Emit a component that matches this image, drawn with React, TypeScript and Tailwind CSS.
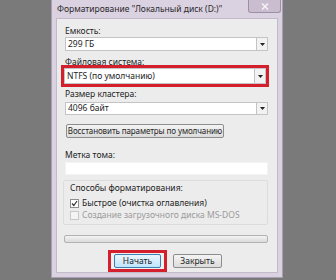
const font = { fontFamily: '"Noto Sans", "Open Sans", sans-serif' };

const Combo = ({ value, h = 14 }: { value: string; h?: number }) => (
  <div
    className="flex items-stretch bg-white border border-[#c4c4c4]"
    style={{ height: h }}
  >
    <div className="flex-1 pl-[2px] text-[8.5px] leading-none flex items-center text-[#1e1e1e] whitespace-nowrap">
      {value}
    </div>
    <div className="w-[11px] flex items-center justify-center border-l border-[#c4c4c4] bg-[#f2f2f2]">
      <svg width="5" height="3" viewBox="0 0 5 3">
        <path d="M0 0h5L2.5 3z" fill="#222" />
      </svg>
    </div>
  </div>
);

const Check = ({ checked, label, disabled }: { checked?: boolean; label: string; disabled?: boolean }) => (
  <div className="flex items-center h-[12px] gap-[3px]">
    <div
      className={
        "w-[9px] h-[9px] border flex items-center justify-center " +
        (disabled ? "border-[#c8c8c8] bg-[#f4f4f4]" : "border-[#8e8f8f] bg-white")
      }
    >
      {checked && (
        <svg width="7" height="7" viewBox="0 0 7 7">
          <path d="M1 3.5l1.8 2L6 1" stroke="#333" strokeWidth="1.2" fill="none" />
        </svg>
      )}
    </div>
    <span
      className={
        "text-[8.5px] leading-none whitespace-nowrap " + (disabled ? "text-[#9b9b9b]" : "text-[#1e1e1e]")
      }
    >
      {label}
    </span>
  </div>
);

export default function App() {
  return (
    <div className="w-[336px] h-[280px] bg-[#7a7a7a] pl-[51px] overflow-hidden" style={font}>
      <div className="w-[232px] h-[278px] bg-[#dad1e1] border-l border-r border-b border-[#a99fb2] flex flex-col">
        {/* title bar */}
        <div className="h-[18px] flex items-start relative">
          <div className="pl-[5px] pt-[5px] text-[8.5px] leading-none text-[#2a2a2a] whitespace-nowrap">
            Форматирование "Локальный диск (D:)"
          </div>
          <div className="absolute right-[1px] top-0 w-[33px] h-[13px] rounded-b-[3px] bg-[#c9bdcf] border border-t-0 border-[#9c90a6] flex items-center justify-center">
            <svg width="8" height="7" viewBox="0 0 8 7">
              <path d="M1 0.5l6 6M7 0.5l-6 6" stroke="#f4f0f6" strokeWidth="1.6" />
            </svg>
          </div>
        </div>

        {/* content */}
        <div className="mx-[4px] h-[255px] bg-[#ececec] border border-[#c3bbc9] flex flex-col pl-[8px] pr-[9px] text-[#1e1e1e] text-[8.5px]">
          <div className="mt-[6px] h-[12px] leading-[12px]">Емкость:</div>
          <Combo value="299 ГБ" />

          <div className="mt-[5px] h-[12px] leading-[12px]">Файловая система:</div>
          <div className="-mt-[3px] -ml-[4px] -mr-[1px] h-[22px] border-[3px] border-[#d4202c] bg-white">
            <Combo value="NTFS (по умолчанию)" h={16} />
          </div>

          <div className="mt-[1px] h-[12px] leading-[12px]">Размер кластера:</div>
          <div className="mt-[2px]">
            <Combo value="4096 байт" h={13} />
          </div>

          <div className="mt-[9px] ml-[1px] w-[158px] h-[14px] rounded-[2px] border border-[#8d8d8d] bg-gradient-to-b from-[#f4f4f4] to-[#dcdcdc] flex items-center justify-center leading-none whitespace-nowrap text-[8px] tracking-[-0.1px]">
            Восстановить параметры по умолчанию
          </div>

          <div className="mt-[11px] h-[12px] leading-[12px]">Метка тома:</div>
          <div className="mt-[1px] h-[13px] bg-white border border-[#f4f4f4]" />

          <div className="mt-[5px] -ml-[2px] h-[45px] border border-[#dcdcdc] rounded-[2px] flex flex-col pl-[6px]">
            <div className="mt-[1px] h-[12px] leading-[12px]">Способы форматирования:</div>
            <div className="mt-[3px] flex flex-col">
              <Check checked label="Быстрое (очистка оглавления)" />
              <Check disabled label="Создание загрузочного диска MS-DOS" />
            </div>
          </div>

          <div className="mt-[10px] -ml-[1px] h-[8px] rounded-[2px] border border-[#b2b2b2] bg-gradient-to-b from-[#f3f3f3] to-[#dadada]" />

          <div className="mt-[7px] flex items-center pl-[43px] gap-[6px]">
            <div className="w-[59px] h-[22px] border-[3px] border-[#d4202c] bg-[#f0f0f0] flex items-center justify-center">
              <div className="w-[47px] h-[14px] rounded-[2px] border border-[#3c7fb1] bg-gradient-to-b from-[#eaf6fd] to-[#bee6fd] flex items-center justify-center leading-none">
                Начать
              </div>
            </div>
            <div className="w-[49px] h-[14px] rounded-[2px] border border-[#8d8d8d] bg-gradient-to-b from-[#f4f4f4] to-[#dcdcdc] flex items-center justify-center leading-none">
              Закрыть
            </div>
          </div>
        </div>
      </div>
    </div>
  );
}
